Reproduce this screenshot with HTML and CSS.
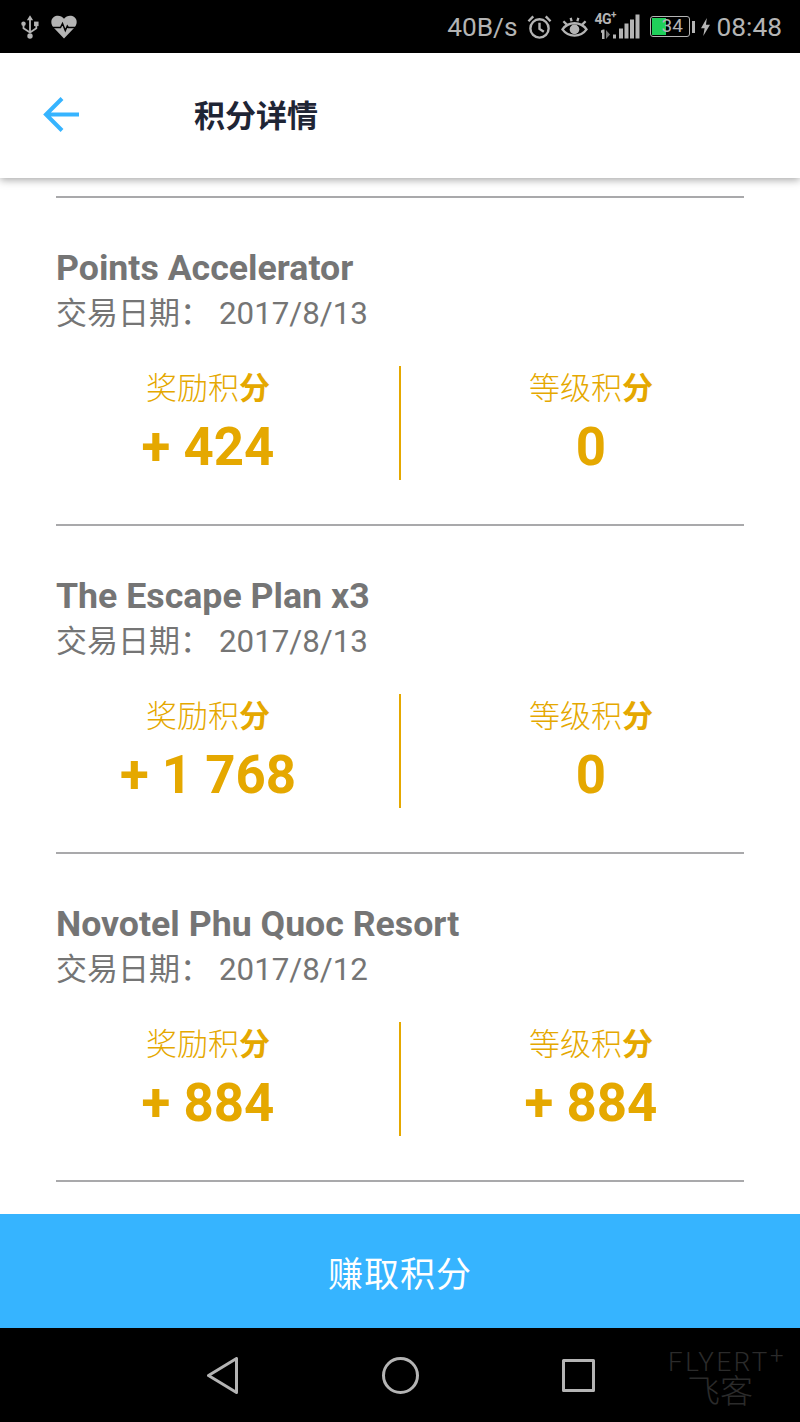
FILE: index.html
```html
<!DOCTYPE html>
<html lang="zh-CN">

<head>
  <meta charset="UTF-8">
  <meta name="viewport" content="width=device-width, initial-scale=1.0">
  <title>积分详情</title>
  <link rel="stylesheet" href="styles.css">
</head>

<body>
  <div class="page">
    <div class="status-bar">
      <div class="status-left">
        <svg class="icon-usb" viewBox="0 0 20 28" fill="#b4b4b4" stroke="#b4b4b4">
          <path d="M10 1l3.500 5.500h-2.500v13.500l-1 1-1-1V6.500H6.500z" stroke="none"/>
          <circle cx="10" cy="24" r="3" stroke="none"/>
          <circle cx="2.800" cy="10.500" r="2.500" stroke="none"/>
          <rect x="14.500" y="8" width="5" height="5" stroke="none"/>
          <path d="M2.800 12v3.500l7.200 4.500M17 12v3.500l-7 4.500" fill="none" stroke-width="2"/>
        </svg>
        <svg class="icon-heart" viewBox="0 0 26 24">
          <path d="M13 23.500L2.500 12.500C-.5 9-.3 4.500 2.500 2.300 5.800-.2 10.500.5 13 3.800 15.500.5 20.200-.2 23.500 2.300c2.800 2.200 3 6.700 0 10.200z" fill="#b4b4b4"/>
          <path d="M1 12.500h8.500l2-4 2.800 7 2-4.500 1 1.500H25" fill="none" stroke="#000" stroke-width="1.500"/>
        </svg>
      </div>
      <div class="status-right">
        <span class="status-text">40B/s</span>
        <svg class="icon-alarm" viewBox="0 0 26 26" fill="none" stroke="#b4b4b4" stroke-width="2.500">
          <circle cx="13" cy="14.500" r="9.500"/>
          <path d="M13 8.500v6.500l4.500 3M1.500 7l5-5M24.500 7l-5-5"/>
        </svg>
        <svg class="icon-eye" viewBox="0 0 28 22" fill="none" stroke="#b4b4b4" stroke-width="2.400">
          <path d="M1.500 13.500c6-8.500 19-8.500 25 0-6 8.500-19 8.500-25 0z"/>
          <circle cx="14" cy="13.500" r="5" fill="#b4b4b4" stroke="none"/>
          <path d="M2.500 5l3.500 3.500M25.500 5L22 8.500M10 1.500l1 3.500M18 1.500L17 5"/>
        </svg>
        <div class="signal">
          <span class="signal-label">4G<sup>+</sup></span>
          <svg viewBox="0 0 50 32" fill="#b4b4b4">
            <path d="M9 19.500l2-1h1.500v9.500H10v-6.500L9 22z"/>
            <path d="M14 19l4 4.500-4 4.500z" fill="#777"/>
            <rect x="21" y="23.500" width="3" height="4"/>
            <rect x="27" y="17.500" width="4" height="10"/>
            <rect x="32.500" y="12.500" width="4" height="15"/>
            <rect x="38" y="8.500" width="4" height="19"/>
            <rect x="43.500" y="3.500" width="4" height="24"/>
          </svg>
        </div>
        <div class="battery">
          <div class="battery-fill"></div>
          <span class="battery-num">34</span>
        </div>
        <span class="battery-tip"></span>
        <svg class="icon-bolt" viewBox="0 0 10 20" fill="#b4b4b4"><path d="M6.500 0L0 11.500h4L2.500 20 10 7.500H5.500z"/></svg>
        <span class="status-text">08:48</span>
      </div>
    </div>

    <div class="header">
      <svg class="back-icon" viewBox="0 0 36 35" fill="none" stroke="#36b4ff" stroke-width="4">
        <path d="M19 1.500L3 17.500l16 16M3 17.500h33"/>
      </svg>
      <h1>积分详情</h1>
    </div>

    <div class="list">
      <div class="item">
        <h2>Points Accelerator</h2>
        <p class="date">交易日期<i>：</i><span>2017/8/13</span></p>
        <div class="stats">
          <div class="stat"><div class="stat-label">奖励积<b>分</b></div><div class="stat-value">+ 424</div></div>
          <div class="stat"><div class="stat-label">等级积<b>分</b></div><div class="stat-value">0</div></div>
        </div>
      </div>
      <div class="item">
        <h2>The Escape Plan x3</h2>
        <p class="date">交易日期<i>：</i><span>2017/8/13</span></p>
        <div class="stats">
          <div class="stat"><div class="stat-label">奖励积<b>分</b></div><div class="stat-value">+ 1 768</div></div>
          <div class="stat"><div class="stat-label">等级积<b>分</b></div><div class="stat-value">0</div></div>
        </div>
      </div>
      <div class="item">
        <h2>Novotel Phu Quoc Resort</h2>
        <p class="date">交易日期<i>：</i><span>2017/8/12</span></p>
        <div class="stats">
          <div class="stat"><div class="stat-label">奖励积<b>分</b></div><div class="stat-value">+ 884</div></div>
          <div class="stat"><div class="stat-label">等级积<b>分</b></div><div class="stat-value">+ 884</div></div>
        </div>
      </div>
      <div class="item"></div>
    </div>

    <button class="earn-button">赚取积分</button>

    <div class="nav-bar">
      <svg class="nav-back" viewBox="0 0 31 37" fill="none" stroke="#b4b4b4" stroke-width="3" stroke-linejoin="round">
        <path d="M29.500 1.500v34L1.500 18.500z"/>
      </svg>
      <svg class="nav-home" viewBox="0 0 37 37" fill="none" stroke="#b4b4b4" stroke-width="3">
        <circle cx="18.500" cy="18.500" r="17"/>
      </svg>
      <svg class="nav-recent" viewBox="0 0 33 33" fill="none" stroke="#b4b4b4" stroke-width="3" stroke-linejoin="round">
        <rect x="1.500" y="1.500" width="30" height="30"/>
      </svg>
    </div>

    <div class="watermark">
      <div class="watermark-en">FLYERT<sup>+</sup></div>
      <div class="watermark-cn">飞客</div>
    </div>
  </div>
</body>

</html>
```

FILE: styles.css
```css
:root {
  --blue: #36b4ff;
  --gold: #e5a800;
  --grey: #757575;
  --line: #a9a9ab;
  --icon: #b4b4b4;
}

* {
  box-sizing: border-box;
  margin: 0;
  padding: 0;
}

body {
  font-family: Roboto, "Noto Sans CJK SC", sans-serif;
  background: #fff;
}

.page {
  position: relative;
  display: flex;
  flex-direction: column;
  width: 800px;
  height: 1422px;
  overflow: hidden;
}

/* Status bar */
.status-bar {
  display: flex;
  justify-content: space-between;
  align-items: center;
  flex: 0 0 53px;
  padding: 0 18px 0 21px;
  background: #000;
  color: var(--icon);
}

.status-left,
.status-right {
  display: flex;
  align-items: center;
}

.status-text {
  font-size: 26.3px;
}

.icon-usb {
  width: 18px;
  height: 26px;
  margin-right: 12px;
}

.icon-heart {
  width: 26px;
  height: 24px;
}

.icon-alarm {
  width: 25px;
  height: 26px;
  margin: 0 9px;
}

.icon-eye {
  width: 27px;
  height: 22px;
  margin-right: 4px;
}

.signal {
  position: relative;
  width: 50px;
  height: 32px;
  margin-right: 8px;
}

.signal svg {
  display: block;
  width: 50px;
  height: 32px;
}

.signal-label {
  position: absolute;
  top: 0;
  left: 3px;
  font-size: 14px;
  font-weight: 700;
  line-height: 16px;
  letter-spacing: -0.5px;
}

.signal-label sup {
  font-size: 10px;
  line-height: 0;
}

.battery {
  position: relative;
  width: 40px;
  height: 21px;
  padding: 1px;
  border: 1.5px solid var(--icon);
  border-radius: 3px;
}

.battery-fill {
  width: 14px;
  height: 100%;
  background: #1fd05a;
}

.battery-num {
  position: absolute;
  top: -2px;
  left: 11px;
  font-size: 19px;
  line-height: 22px;
}

.battery-tip {
  width: 3px;
  height: 12px;
  margin: 0 6px 0 2px;
  background: var(--icon);
}

.icon-bolt {
  width: 9px;
  height: 18px;
  margin-right: 7px;
}

/* Header */
.header {
  position: relative;
  z-index: 1;
  display: flex;
  align-items: center;
  flex: 0 0 125px;
  padding-left: 43px;
  background: #fff;
  box-shadow: 0 2px 8px rgba(0, 0, 0, 0.35);
}

.back-icon {
  width: 36px;
  height: 35px;
  margin-bottom: 2px;
}

.header h1 {
  margin: 0 0 4px 115px;
  font-size: 31px;
  font-weight: 700;
  color: #1f2535;
}

/* Points list */
.list {
  flex: 1;
  min-height: 0;
  padding: 18px 56px 0;
  overflow: hidden;
}

.item {
  height: 328px;
  padding-top: 49px;
  border-top: 2px solid var(--line);
}

.item h2 {
  font-size: 35.7px;
  font-weight: 700;
  line-height: 42px;
  color: var(--grey);
}

.date {
  height: 42px;
  margin-top: 1px;
  font-size: 31px;
  line-height: 42px;
  color: var(--grey);
}

.date i {
  font-family: "Noto Sans CJK TC", sans-serif;
  font-style: normal;
}

.date span {
  margin-left: 8px;
  font-size: 31.3px;
}

.stats {
  display: grid;
  grid-template-columns: 1fr 1fr;
  height: 114px;
  margin: 34px -37px 0 -39px;
}

.stat {
  text-align: center;
}

.stat + .stat {
  border-left: 2px solid var(--gold);
}

.stat-label {
  font-size: 31px;
  font-weight: 300;
  line-height: 46px;
  color: var(--gold);
}

.stat-label b {
  font-weight: 700;
}

.stat-value {
  margin-top: 5px;
  font-size: 52.8px;
  font-weight: 700;
  line-height: 60px;
  color: var(--gold);
}

/* Bottom */
.earn-button {
  flex: 0 0 114px;
  border: none;
  background: var(--blue);
  color: #fff;
  font-family: inherit;
  font-size: 35px;
  letter-spacing: 1px;
}

.nav-bar {
  display: flex;
  align-items: center;
  flex: 0 0 94px;
  padding-left: 207px;
  background: #000;
}

.nav-back {
  width: 31px;
  height: 37px;
  margin-right: 144px;
}

.nav-home {
  width: 37px;
  height: 37px;
  margin-right: 143px;
}

.nav-recent {
  width: 33px;
  height: 33px;
}

.watermark {
  position: absolute;
  right: 14px;
  bottom: 14px;
  width: 118px;
  color: #2b2b2b;
}

.watermark-en {
  font-size: 26px;
  font-weight: 300;
  line-height: 28px;
  letter-spacing: 2.5px;
}

.watermark-en sup {
  position: absolute;
  top: -6px;
  right: 0;
  font-size: 24px;
  line-height: 28px;
}

.watermark-cn {
  padding-left: 19px;
  font-size: 33px;
  font-weight: 300;
  line-height: 32px;
}
```
